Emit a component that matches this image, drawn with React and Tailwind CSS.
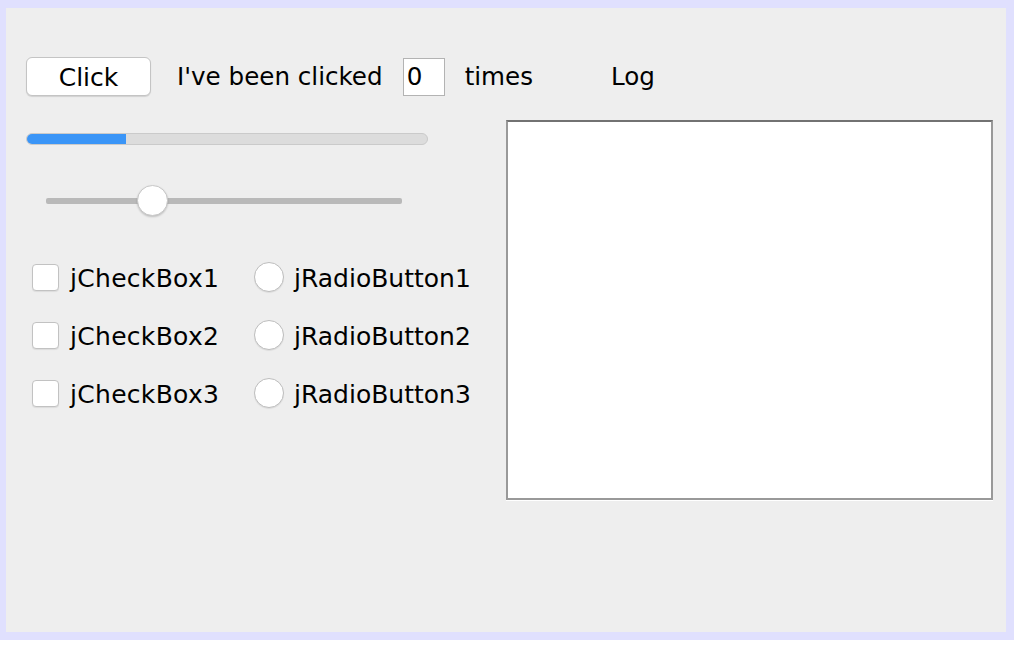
import { useState } from 'react'

const FONT = { fontFamily: '"DejaVu Sans", Verdana, sans-serif' }

function CheckRow({ label }) {
  return (
    <label className="flex items-center h-[30px]">
      <span className="w-[27px] h-[27px] ml-[6px] rounded-[4px] bg-white border border-[#c2c2c2] shadow-[0_1px_1px_rgba(0,0,0,0.08)]" />
      <span className="ml-[11px] tracking-[0.3px] pt-[2px]">{label}</span>
    </label>
  )
}

function RadioRow({ label }) {
  return (
    <label className="flex items-center h-[30px]">
      <span className="w-[30px] h-[30px] rounded-full bg-white border border-[#bdbdbd] shadow-[0_1px_1px_rgba(0,0,0,0.08)]" />
      <span className="ml-[10px] pt-[2px]">{label}</span>
    </label>
  )
}

export default function App() {
  const [count, setCount] = useState(0)

  return (
    <div className="bg-white w-[1016px] h-[648px]" style={FONT}>
      <div className="bg-[#e0e0fe] w-[1014px] h-[640px] pt-[8px] pl-[6px] pr-[8px] pb-[8px]">
        <div className="bg-[#eeeeee] w-full h-full pt-[49px] pl-[20px] text-[25px] text-black leading-none">
          {/* top row */}
          <div className="flex items-center h-[39px] text-[24.6px]">
            <button
              onClick={() => setCount(count + 1)}
              className="w-[125px] h-[39px] bg-white border border-[#c4c4c4] rounded-[6px] shadow-[0_1px_1px_rgba(0,0,0,0.12)] text-[25px] leading-none pt-[1px]"
            >
              Click
            </button>
            <span className="ml-[26px] pt-[2px]">I've been clicked</span>
            <div className="ml-[20px] w-[42px] h-[38px] bg-white border border-[#b3b3b3] flex items-center pl-[3px] pt-[2px]">
              {count}
            </div>
            <span className="ml-[20px] pt-[2px]">times</span>
            <span className="ml-[78px] pt-[2px]">Log</span>
          </div>

          <div className="flex mt-[24px]">
            {/* left column */}
            <div className="w-[480px] flex flex-col">
              <div className="mt-[13px] w-[402px] h-[12px] rounded-full bg-[#dcdcdc] border border-[#cacaca] overflow-hidden">
                <div className="h-full w-[99px] bg-[#3a95f7]" />
              </div>

              <div className="mt-[40px] ml-[20px] w-[356px] h-[31px] relative flex items-center">
                <div className="w-full h-[6px] rounded-[2px] bg-[#b9b9b9]" />
                <div className="absolute left-[91px] top-0 w-[31px] h-[31px] rounded-full bg-white border border-[#c8c8c8] shadow-[0_1px_2px_rgba(0,0,0,0.2)]" />
              </div>

              <div className="mt-[46px] flex">
                <div className="w-[228px] flex flex-col gap-[28px]">
                  <CheckRow label="jCheckBox1" />
                  <CheckRow label="jCheckBox2" />
                  <CheckRow label="jCheckBox3" />
                </div>
                <div className="flex flex-col gap-[28px]">
                  <RadioRow label="jRadioButton1" />
                  <RadioRow label="jRadioButton2" />
                  <RadioRow label="jRadioButton3" />
                </div>
              </div>
            </div>

            {/* log area */}
            <div className="border-b border-white">
              <div className="w-[487px] h-[380px] bg-white border-2 border-[#999999] border-t-[#727272]" />
            </div>
          </div>
        </div>
      </div>
    </div>
  )
}
